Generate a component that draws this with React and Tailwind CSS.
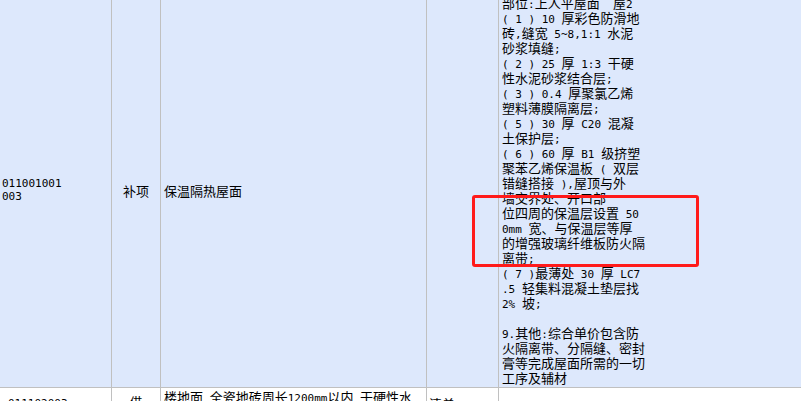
import React from 'react';

// description lines of the supplementary item, wrapped as in the grid
const desc = [
  '部位:上人平屋面  屋2',
  '( 1 ) 10 厚彩色防滑地',
  '砖,缝宽 5~8,1:1 水泥',
  '砂浆填缝;',
  '( 2 ) 25 厚 1:3 干硬',
  '性水泥砂浆结合层;',
  '( 3 ) 0.4 厚聚氯乙烯',
  '塑料薄膜隔离层;',
  '( 5 ) 30 厚 C20 混凝',
  '土保护层;',
  '( 6 ) 60 厚 B1 级挤塑',
  '聚苯乙烯保温板 ( 双层',
  '错缝搭接 ),屋顶与外',
  '墙交界处、开口部',
  '位四周的保温层设置 50',
  '0mm 宽、与保温层等厚',
  '的增强玻璃纤维板防火隔',
  '离带;',
  '( 7 )最薄处 30 厚 LC7',
  '.5 轻集料混凝土垫层找',
  '2% 坡;',
  '',
  '9.其他:综合单价包含防',
  '火隔离带、分隔缝、密封',
  '膏等完成屋面所需的一切',
  '工序及辅材',
];

function Txt({ s }) {
  return s.split(/([\x20-\x7e]+)/).map((p, i) =>
    /^[\x20-\x7e]+$/.test(p) ? (
      <span key={i} className="font-['DejaVu_Sans_Mono'] text-[11px]">{p}</span>
    ) : (
      p
    )
  );
}

export default function App() {
  return (
    <div className="relative w-[801px] h-[401px] overflow-hidden bg-white text-black font-['Noto_Sans_CJK_SC',sans-serif] text-[13px]">
      <div className="-mt-[8px]">
        <div className="flex bg-[#dde8fc] border-b border-[#c0c0c0]">
          <div className="w-[112px] shrink-0 border-r border-[#c0c0c0] flex items-center pl-[2px] pt-[1px]">
            <div className="font-['DejaVu_Sans_Mono'] text-[11px] leading-[13px]">
              011001001
              <br />
              003
            </div>
          </div>
          <div className="w-[49px] shrink-0 border-r border-[#c0c0c0] flex items-center justify-center pt-[2px]">
            补项
          </div>
          <div className="w-[266px] shrink-0 border-r border-[#c0c0c0] flex items-center pl-[3px] pt-[2px]">
            保温隔热屋面
          </div>
          <div className="w-[72px] shrink-0 border-r border-[#c0c0c0]"></div>
          <div className="flex-1 pl-[3px] pt-[3px] pb-[2px]">
            {desc.map((l, i) => (
              <div key={i} className="h-[15px] leading-[15px] whitespace-pre">
                <Txt s={l} />
              </div>
            ))}
          </div>
        </div>

        <div className="flex h-[40px] bg-white">
          <div className="w-[112px] shrink-0 border-r border-[#c0c0c0] pl-[8px] pt-[9px]">
            <div className="font-['DejaVu_Sans_Mono'] text-[11px] leading-[13px]">011102003</div>
          </div>
          <div className="w-[49px] shrink-0 border-r border-[#c0c0c0] pt-[6px] leading-[15px] text-center">借</div>
          <div className="w-[266px] shrink-0 border-r border-[#c0c0c0] pl-[3px] pt-[1px] leading-[15px] whitespace-pre">
            <Txt s="楼地面 全瓷地砖周长1200mm以内 干硬性水" />
          </div>
          <div className="w-[72px] shrink-0 border-r border-[#c0c0c0] pl-[2px] pt-[8px] leading-[15px]">清单</div>
          <div className="flex-1"></div>
        </div>
      </div>

      <div className="absolute left-[472px] top-[195px] w-[227px] h-[72px] border-[3px] border-[#ff1a1a] rounded-[3px]"></div>
    </div>
  );
}
